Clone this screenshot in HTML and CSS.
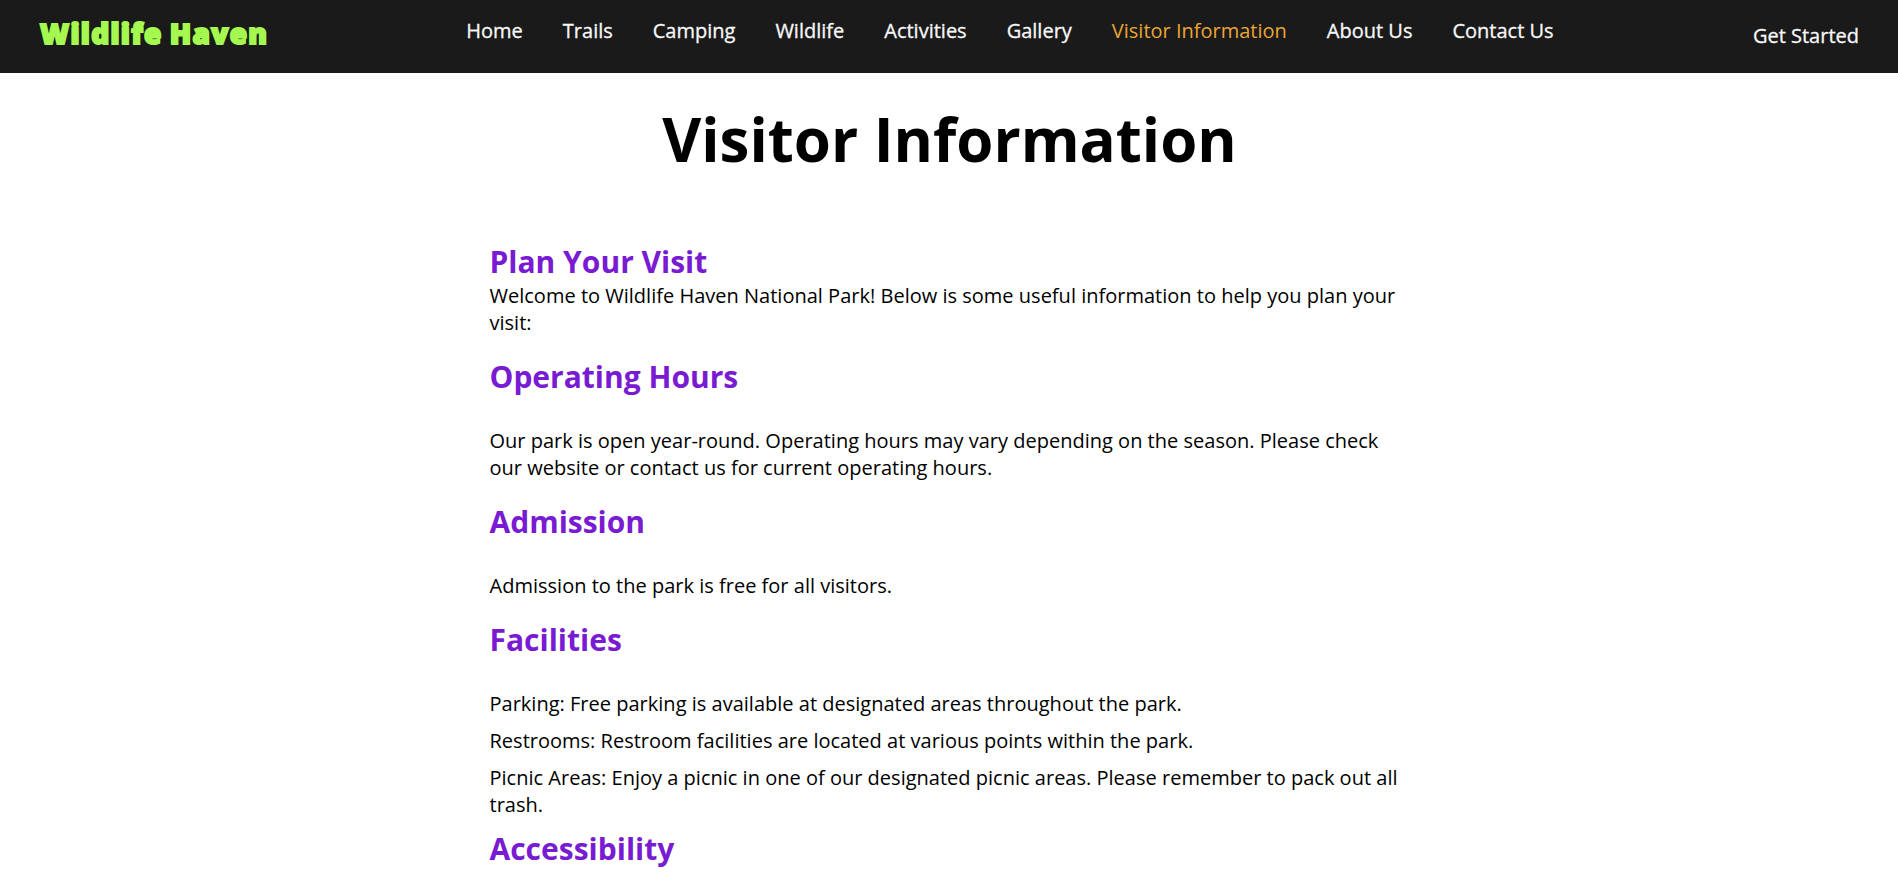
FILE: index.html
```html
<!DOCTYPE html>
<html lang="en">
<head>
<meta charset="utf-8">
<title>Visitor Information</title>
<link rel="stylesheet" href="styles.css">
</head>
<body>
<header class="navbar">
  <a class="logo">Wildlife Haven</a>
  <nav class="links">
    <a>Home</a><a>Trails</a><a>Camping</a><a>Wildlife</a><a>Activities</a><a>Gallery</a><a class="active">Visitor Information</a><a>About Us</a><a>Contact Us</a>
  </nav>
  <a class="cta">Get Started</a>
</header>
<h1 class="title">Visitor Information</h1>
<main class="content">
  <h2 class="first">Plan Your Visit</h2>
  <p class="intro">Welcome to Wildlife Haven National Park! Below is some useful information to help you plan your visit:</p>
  <h2>Operating Hours</h2>
  <p>Our park is open year-round. Operating hours may vary depending on the season. Please check our website or contact us for current operating hours.</p>
  <h2>Admission</h2>
  <p>Admission to the park is free for all visitors.</p>
  <h2>Facilities</h2>
  <ul class="list">
    <li>Parking: Free parking is available at designated areas throughout the park.</li>
    <li>Restrooms: Restroom facilities are located at various points within the park.</li>
    <li>Picnic Areas: Enjoy a picnic in one of our designated picnic areas. Please remember to pack out all trash.</li>
  </ul>
  <h2>Accessibility</h2>
</main>
</body>
</html>
```
FILE: styles.css
```css
* { margin: 0; padding: 0; box-sizing: border-box; }
body { font-family: "Open Sans", sans-serif; height: 876px; overflow: hidden; background: #fff; color: #000; }
.navbar { height: 73px; background: #1a1a1a; color: #f8f8f8; display: flex; justify-content: space-between; padding: 0 39px; font-size: 20px; line-height: 27px; font-weight: 500; }
.logo { font-size: 28px; font-weight: 800; color: #a5f84f; padding: 20px 0 0 1px; width: 228px; white-space: nowrap; letter-spacing: 1.3px; word-spacing: -1.5px; -webkit-text-stroke: 2px #a5f84f; }
.links { display: flex; gap: 40px; padding-top: 17px; }
.links a, .cta { -webkit-text-stroke: 0.3px currentColor; }
.links .active { color: #eba436; -webkit-text-stroke: 0; }
.cta { padding-top: 22px; }
.title { text-align: center; font-size: 60px; line-height: 82px; margin-top: 25px; padding-left: 1px; }
.content { width: 920px; margin: 0 auto; padding: 61px 0 0 0.5px; font-size: 20px; line-height: 27px; letter-spacing: 0.01px; }
.content h2 { font-size: 30px; line-height: 41px; color: #791bd2; margin-bottom: 30px; letter-spacing: 0; }
.content .first { margin-bottom: 0; }
.content p { margin-bottom: 20px; }
.list { list-style: none; }
.list li { margin-bottom: 10px; }
```
